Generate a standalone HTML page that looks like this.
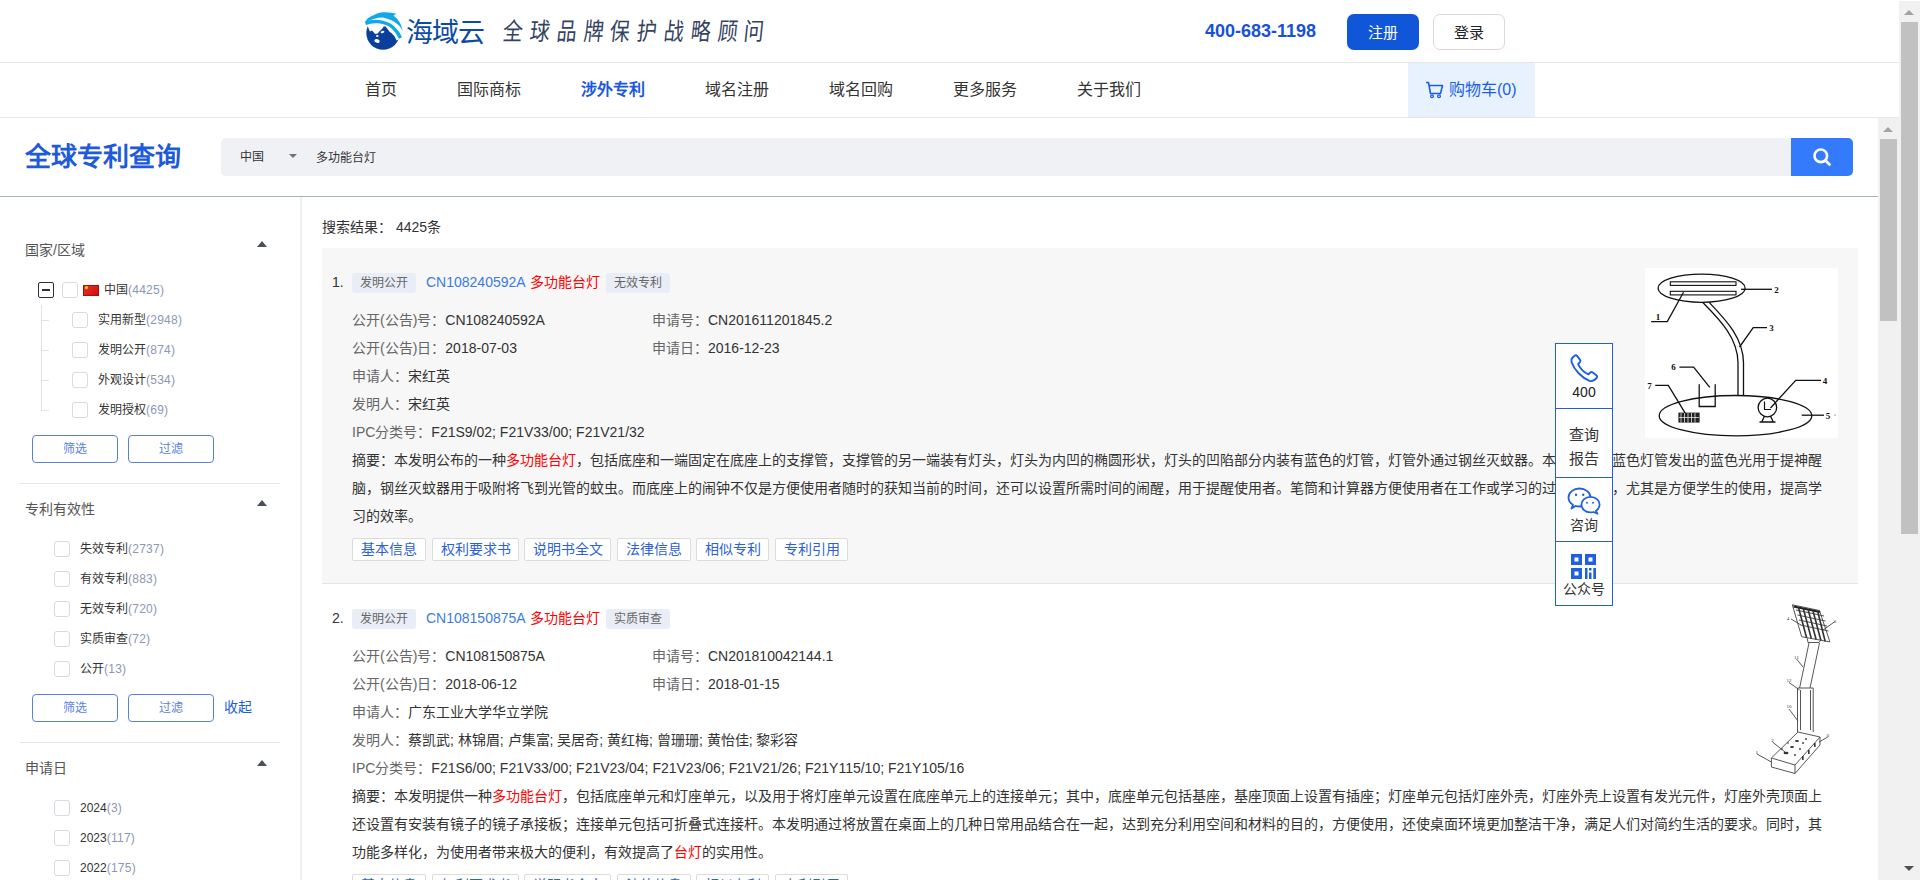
<!DOCTYPE html>
<html lang="zh-CN"><head><meta charset="utf-8">
<style>
*{margin:0;padding:0;box-sizing:border-box}
html,body{width:1920px;height:880px;overflow:hidden;background:#fff}
body{font-family:"Liberation Sans",sans-serif;color:#333;position:relative}
.a{position:absolute;white-space:nowrap}
/* header */
#hdr{position:absolute;left:0;top:0;width:1899px;height:63px;border-bottom:1px solid #e6e6e6;background:#fff}
#nav{position:absolute;left:0;top:63px;width:1899px;height:55px;border-bottom:1px solid #e6e6e6;background:#fff}
.nv{position:absolute;top:0;height:54px;line-height:54px;font-size:16px;color:#333}
.btn{position:absolute;top:14px;width:72px;height:36px;border-radius:7px;font-size:15px;line-height:36px;text-align:center}
/* search */
#srch{position:absolute;left:0;top:118px;width:1878px;height:79px;border-bottom:1px solid #a5afc8;background:#fff}
/* sidebar */
#side{position:absolute;left:0;top:197px;width:302px;height:683px;border-right:2px solid #f0f0f0;background:#fff}
.sh{position:absolute;left:25px;font-size:14px;color:#555;line-height:20px}
.car{position:absolute;left:257px;width:0;height:0;border-left:5px solid transparent;border-right:5px solid transparent;border-bottom:6px solid #4a4f5c}
.cb{position:absolute;width:16px;height:16px;border:1px solid #d7dae1;border-radius:3px;background:#fff}
.lt{position:absolute;font-size:12px;line-height:16px;color:#333}
.lt i{font-style:normal;color:#8c96b8;letter-spacing:0.25px}
.sb{position:absolute;width:86px;height:28px;border:1px solid #5b7fdc;border-radius:4px;font-size:12px;line-height:26px;text-align:center;color:#5b7fdc;background:#fff}
.dv{position:absolute;left:20px;width:260px;height:1px;background:#e3e6ee}
/* main */
.card{position:absolute;left:322px;width:1536px;height:336px}
.num{position:absolute;left:10px;top:24px;font-size:14px;line-height:20px;color:#333}
.tag{position:absolute;top:25px;height:20px;line-height:19px;padding:1px 8px 0;font-size:12px;color:#666;background:#e9edf6;border-radius:3px}
.cn{position:absolute;left:104px;top:24px;font-size:14px;line-height:20px;color:#3a7bdf}
.hl{color:#f00}
.row{position:absolute;left:30px;font-size:14px;line-height:28px;color:#333}
.row b{font-weight:normal;color:#666}
.ops{position:absolute;left:30px;display:flex;gap:6px}
.op{position:absolute;text-align:center;height:23px;border:1px solid #dcdcdc;border-radius:2px;background:#fff;padding:0;font-size:14px;line-height:21px;color:#2d5fd6}
/* scrollbars */
.trk{position:absolute;background:#f1f1f1}
.thm{position:absolute;background:#c1c1c1}
</style></head><body>

<!-- HEADER -->
<div id="hdr">
  <svg class="a" style="left:360px;top:8px" width="48" height="46" viewBox="0 0 48 46">
    <circle cx="23" cy="25.1" r="16.7" fill="#0a3f9c"/>
    <path d="M2 2 H46 V32.4 L38.7 31.4 L36.6 32.4 L34.5 28.2 L31.4 25.1 L29.3 23.5 L27.2 20.4 L25.1 18.3 L23.5 18.8 L22 20.9 L19.3 23.5 L17.8 25.6 L15.2 26.1 L12 22.5 L9.9 23.5 L7.3 17.3 L2 17 Z" fill="#fff"/>
    <path d="M40 32 L46 32 V46 H40 Z" fill="#fff" opacity="0"/>
    <ellipse cx="22.5" cy="24" rx="2" ry="1" fill="#fff" transform="rotate(-25 22.5 24)"/>
    <ellipse cx="17.3" cy="28" rx="1.3" ry="1" fill="#fff"/>
    <path d="M14.5 32 C15.5 30.5 18 30.8 19.5 32.5 C20 34 19 35.5 17.5 35 C16 34.5 14 34 14.5 32 Z" fill="#fff"/>
    <path d="M5.5 15.5 C12 12.3 25 12.5 33 19.5 C36.5 22.8 39 26.5 40.5 30" fill="none" stroke="#10a8e8" stroke-width="3.4"/>
    <path d="M5 15 C6 11 10 8.5 13.6 7.3 C17 4.7 21 4 25 4.2 C30 4.4 33.5 5 36.1 5.8 L33.5 7.8 C38 10.5 41.5 16 42.6 23 C40 17.5 35 12.3 23 9.6 C17 9.6 10 11.5 5 15 Z" fill="#10a8e8"/>
  </svg>
  <div class="a" style="left:406px;top:15.5px;font-size:27px;line-height:34px;color:#0c4aa5;letter-spacing:-1px">海域云</div>
  <div class="a" style="left:503px;top:16px;font-size:20px;line-height:30px;color:#34435f;letter-spacing:6.8px;font-weight:300;transform:skewX(-6deg) scaleY(1.22);transform-origin:0 50%">全球品牌保护战略顾问</div>
  <div class="a" style="left:1205px;top:19px;font-size:18px;line-height:24px;font-weight:bold;color:#1652d6">400-683-1198</div>
  <div class="btn" style="left:1347px;background:#0f56d9;color:#fff;line-height:38px">注册</div>
  <div class="btn" style="left:1433px;border:1px solid #d9d9d9;color:#222;line-height:36px">登录</div>
</div>
<div id="nav">
  <div class="nv" style="left:365px">首页</div>
  <div class="nv" style="left:457px">国际商标</div>
  <div class="nv" style="left:581px;color:#1a58e0;font-weight:bold">涉外专利</div>
  <div class="nv" style="left:705px">域名注册</div>
  <div class="nv" style="left:829px">域名回购</div>
  <div class="nv" style="left:953px">更多服务</div>
  <div class="nv" style="left:1077px">关于我们</div>
  <div class="a" style="left:1408px;top:0;width:127px;height:54px;background:#e8f2fe"></div>
  <svg class="a" style="left:1425px;top:18px" width="20" height="18" viewBox="0 0 20 18">
    <path d="M1 1.5 H3.5 L5.5 12.5 H15.5 L17.5 4.5 H4.5" fill="none" stroke="#1a5ee8" stroke-width="1.6" stroke-linejoin="round"/>
    <circle cx="7" cy="15.3" r="1.4" fill="none" stroke="#1a5ee8" stroke-width="1.3"/>
    <circle cx="14" cy="15.3" r="1.4" fill="none" stroke="#1a5ee8" stroke-width="1.3"/>
  </svg>
  <div class="nv" style="left:1449px;color:#1a5ee8">购物车(0)</div>
</div>

<!-- SEARCH -->
<div id="srch">
  <div class="a" style="left:25px;top:22px;font-size:26px;line-height:34px;font-weight:bold;color:#1d5bdb">全球专利查询</div>
  <div class="a" style="left:221px;top:20px;width:1570px;height:38px;background:#f0f1f5;border-radius:5px 0 0 5px"></div>
  <div class="a" style="left:240px;top:20px;font-size:12px;line-height:38px;color:#333">中国</div>
  <div class="a" style="left:289px;top:36px;width:0;height:0;border-left:4.5px solid transparent;border-right:4.5px solid transparent;border-top:4.5px solid #6e717a"></div>
  <div class="a" style="left:316px;top:21px;font-size:12px;line-height:38px;color:#333">多功能台灯</div>
  <div class="a" style="left:1791px;top:20px;width:62px;height:38px;background:#347afc;border-radius:0 5px 5px 0"></div>
  <svg class="a" style="left:1812px;top:29px" width="20" height="20" viewBox="0 0 20 20">
    <circle cx="8.8" cy="8.8" r="6.3" fill="none" stroke="#fff" stroke-width="2.6"/>
    <path d="M13.5 13.5 L17.5 17.5" stroke="#fff" stroke-width="2.8" stroke-linecap="round"/>
  </svg>
</div>

<!-- SIDEBAR -->
<div id="side">
  <div class="sh" style="top:43px">国家/区域</div>
  <div class="car" style="top:44px"></div>
  <div class="a" style="left:38px;top:85px;width:16px;height:16px;border:1.5px solid #2b2f3a;border-radius:2px"></div>
  <div class="a" style="left:42px;top:92px;width:8px;height:2px;background:#2b2f3a"></div>
  <div class="cb" style="left:62px;top:85px"></div>
  <div class="a" style="left:83px;top:88px;width:16px;height:11px;background:linear-gradient(135deg,#e8332a,#c80f0f);border:1px solid #b50808"></div>
  <div class="a" style="left:85px;top:89px;width:3px;height:3px;background:#ffde00;border-radius:50%"></div>
  <div class="lt" style="left:104px;top:85px">中国<i>(4425)</i></div>
  <div class="a" style="left:41px;top:108px;width:1px;height:106px;background:#e3e3e3"></div>
  <div class="a" style="left:41px;top:123px;width:8px;height:1px;background:#e3e3e3"></div>
  <div class="a" style="left:41px;top:153px;width:8px;height:1px;background:#e3e3e3"></div>
  <div class="a" style="left:41px;top:183px;width:8px;height:1px;background:#e3e3e3"></div>
  <div class="a" style="left:41px;top:213px;width:8px;height:1px;background:#e3e3e3"></div>
  <div class="cb" style="left:72px;top:115px"></div><div class="lt" style="left:98px;top:115px">实用新型<i>(2948)</i></div>
  <div class="cb" style="left:72px;top:145px"></div><div class="lt" style="left:98px;top:145px">发明公开<i>(874)</i></div>
  <div class="cb" style="left:72px;top:175px"></div><div class="lt" style="left:98px;top:175px">外观设计<i>(534)</i></div>
  <div class="cb" style="left:72px;top:205px"></div><div class="lt" style="left:98px;top:205px">发明授权<i>(69)</i></div>
  <div class="sb" style="left:32px;top:238px">筛选</div>
  <div class="sb" style="left:128px;top:238px">过滤</div>
  <div class="dv" style="top:286px"></div>

  <div class="sh" style="top:302px">专利有效性</div>
  <div class="car" style="top:303px"></div>
  <div class="cb" style="left:54px;top:344px"></div><div class="lt" style="left:80px;top:344px">失效专利<i>(2737)</i></div>
  <div class="cb" style="left:54px;top:374px"></div><div class="lt" style="left:80px;top:374px">有效专利<i>(883)</i></div>
  <div class="cb" style="left:54px;top:404px"></div><div class="lt" style="left:80px;top:404px">无效专利<i>(720)</i></div>
  <div class="cb" style="left:54px;top:434px"></div><div class="lt" style="left:80px;top:434px">实质审查<i>(72)</i></div>
  <div class="cb" style="left:54px;top:464px"></div><div class="lt" style="left:80px;top:464px">公开<i>(13)</i></div>
  <div class="sb" style="left:32px;top:497px">筛选</div>
  <div class="sb" style="left:128px;top:497px">过滤</div>
  <div class="a" style="left:224px;top:500px;font-size:14px;line-height:20px;color:#1a5ee0">收起</div>
  <div class="dv" style="top:545px"></div>

  <div class="sh" style="top:561px">申请日</div>
  <div class="car" style="top:563px"></div>
  <div class="cb" style="left:54px;top:603px"></div><div class="lt" style="left:80px;top:603px">2024<i>(3)</i></div>
  <div class="cb" style="left:54px;top:633px"></div><div class="lt" style="left:80px;top:633px">2023<i>(117)</i></div>
  <div class="cb" style="left:54px;top:663px"></div><div class="lt" style="left:80px;top:663px">2022<i>(175)</i></div>
</div>

<!-- MAIN -->
<div class="a" style="left:322px;top:217px;font-size:14px;line-height:20px;color:#333">搜索结果： 4425条</div>

<div class="card" style="top:248px;background:#f7f7f7;border-bottom:1px solid #e2e4eb">
  <div class="num">1.</div>
  <div class="tag" style="left:30px">发明公开</div>
  <div class="cn">CN108240592A <span class="hl" style="margin-left:1.5px">多功能台灯</span></div>
  <div class="tag" style="left:284px">无效专利</div>
  <div class="row" style="top:58px"><b>公开(公告)号：</b>CN108240592A</div>
  <div class="row" style="top:58px;left:330px"><b>申请号：</b>CN201611201845.2</div>
  <div class="row" style="top:86px"><b>公开(公告)日：</b>2018-07-03</div>
  <div class="row" style="top:86px;left:330px"><b>申请日：</b>2016-12-23</div>
  <div class="row" style="top:114px"><b>申请人：</b>宋红英</div>
  <div class="row" style="top:142px"><b>发明人：</b>宋红英</div>
  <div class="row" style="top:170px"><b>IPC分类号：</b>F21S9/02; F21V33/00; F21V21/32</div>
  <div class="row" style="top:198px">摘要：本发明公布的一种<span class="hl">多功能台灯</span>，包括底座和一端固定在底座上的支撑管，支撑管的另一端装有灯头，灯头为内凹的椭圆形状，灯头的凹陷部分内装有蓝色的灯管，灯管外通过钢丝灭蚊器。本发明中的蓝色灯管发出的蓝色光用于提神醒</div>
  <div class="row" style="top:226px">脑，钢丝灭蚊器用于吸附将飞到光管的蚊虫。而底座上的闹钟不仅是方便使用者随时的获知当前的时间，还可以设置所需时间的闹醒，用于提醒使用者。笔筒和计算器方便使用者在工作或学习的过程中使用，尤其是方便学生的使用，提高学</div>
  <div class="row" style="top:254px">习的效率。</div>
  <div class="op" style="top:290px;left:30px;width:74px">基本信息</div><div class="op" style="top:290px;left:110px;width:87px">权利要求书</div><div class="op" style="top:290px;left:202px;width:87px">说明书全文</div><div class="op" style="top:290px;left:295px;width:74px">法律信息</div><div class="op" style="top:290px;left:374px;width:73px">相似专利</div><div class="op" style="top:290px;left:453px;width:73px">专利引用</div>
  <div class="a" style="left:1323px;top:20px;width:193px;height:170px;background:#fff">
    <svg width="193" height="170" viewBox="0 0 193 170" style="position:absolute;left:0;top:0">
<g fill="none" stroke="#111" stroke-width="1.3">
<ellipse cx="56.6" cy="20.2" rx="43.5" ry="14.1"/>
<rect x="25.3" y="13.8" width="65.7" height="3.6" stroke-width="1.1"/>
<rect x="25.3" y="23.3" width="65.7" height="3.6" stroke-width="1.1"/>
<path d="M96 21.3 H127"/>
<path d="M38.5 24.3 L22.3 53.6 H6.1"/>
<path d="M57.7 34.4 C75 52 93 70 93 95 V127.4"/>
<path d="M64.2 34.4 C81 52 98.5 70 98.5 95 V127.4"/>
<path d="M94.5 79 L108.2 59.7 H122"/>
<ellipse cx="90.5" cy="147.7" rx="76.3" ry="20.2"/>
<path d="M54.2 116.3 V138.5 H70.2 V116.3"/>
<path d="M34.4 99.1 H48.6 L64.8 119.3"/>
<path d="M10.2 117.3 H23.3 L40.5 145.6"/>
<circle cx="122.4" cy="139.5" r="9.3"/>
<path d="M119.5 133.5 V141.5 H126" stroke-width="1.2"/>
<path d="M117 153.5 L119.5 148 M128 153.5 L125.5 148 M114.5 154 H130.5"/>
<path d="M125.5 140 L150.7 112.3 H176"/>
<path d="M156.7 147.2 H179"/>
</g>
<rect x="33.4" y="144.6" width="21.2" height="10" fill="#222"/>
<path d="M36 145 V154.5 M39.5 145 V154.5 M43 145 V154.5 M46.5 145 V154.5 M50 145 V154.5 M34 149.5 H54" stroke="#fff" stroke-width="0.7"/>
<g font-family="Liberation Serif" font-weight="bold" font-size="9" fill="#111" text-anchor="middle">
<text x="131.5" y="24.5">2</text><text x="13" y="52">1</text><text x="126.4" y="63">3</text>
<text x="28.4" y="101.5">6</text><text x="4.5" y="121">7</text><text x="180" y="116">4</text><text x="183" y="151">5</text>
</g>
<circle cx="190" cy="147" r="0.6" fill="#333"/>
</svg>
  </div>
</div>

<div class="card" style="top:584px;background:#fff">
  <div class="num">2.</div>
  <div class="tag" style="left:30px">发明公开</div>
  <div class="cn">CN108150875A <span class="hl" style="margin-left:1.5px">多功能台灯</span></div>
  <div class="tag" style="left:284px">实质审查</div>
  <div class="row" style="top:58px"><b>公开(公告)号：</b>CN108150875A</div>
  <div class="row" style="top:58px;left:330px"><b>申请号：</b>CN201810042144.1</div>
  <div class="row" style="top:86px"><b>公开(公告)日：</b>2018-06-12</div>
  <div class="row" style="top:86px;left:330px"><b>申请日：</b>2018-01-15</div>
  <div class="row" style="top:114px"><b>申请人：</b>广东工业大学华立学院</div>
  <div class="row" style="top:142px"><b>发明人：</b>蔡凯武; 林锦眉; 卢集富; 吴居奇; 黄红梅; 曾珊珊; 黄怡佳; 黎彩容</div>
  <div class="row" style="top:170px"><b>IPC分类号：</b>F21S6/00; F21V33/00; F21V23/04; F21V23/06; F21V21/26; F21Y115/10; F21Y105/16</div>
  <div class="row" style="top:198px">摘要：本发明提供一种<span class="hl">多功能台灯</span>，包括底座单元和灯座单元，以及用于将灯座单元设置在底座单元上的连接单元；其中，底座单元包括基座，基座顶面上设置有插座；灯座单元包括灯座外壳，灯座外壳上设置有发光元件，灯座外壳顶面上</div>
  <div class="row" style="top:226px">还设置有安装有镜子的镜子承接板；连接单元包括可折叠式连接杆。本发明通过将放置在桌面上的几种日常用品结合在一起，达到充分利用空间和材料的目的，方便使用，还使桌面环境更加整洁干净，满足人们对简约生活的要求。同时，其</div>
  <div class="row" style="top:254px">功能多样化，为使用者带来极大的便利，有效提高了<span class="hl">台灯</span>的实用性。</div>
  <div class="op" style="top:290px;left:30px;width:74px">基本信息</div><div class="op" style="top:290px;left:110px;width:87px">权利要求书</div><div class="op" style="top:290px;left:202px;width:87px">说明书全文</div><div class="op" style="top:290px;left:295px;width:74px">法律信息</div><div class="op" style="top:290px;left:374px;width:73px">相似专利</div><div class="op" style="top:290px;left:453px;width:73px">专利引用</div>
  <div class="a" style="left:1323px;top:20px;width:193px;height:170px;background:#fff">
    <svg width="193" height="170" viewBox="0 0 193 170" style="position:absolute;left:0;top:0">
<g fill="none" stroke="#444" stroke-width="0.9">
<path d="M147.3 0.8 L174.5 6.5 L184.9 37.9 L156.7 32.7 Z" fill="#fff"/>
<path d="M148.5 2.5 L175 8" stroke="#222" stroke-width="2.2"/>
<path d="M151 6 L179 12 M152.5 11 L180.5 17 M154 16 L182 22 M155.5 21 L183.5 27"/>
<path d="M153.5 3.5 L161.5 33.5 M158.3 4.5 L166.3 34.5 M163.1 5.5 L171.1 35.5 M167.9 6.5 L175.9 36.5 M172.7 7.5 L180.2 37.5" stroke="#333" stroke-width="1.6"/>
<path d="M162 33.5 L163 38.5 H174 L176 35.5"/>
<path d="M164 39 L154.6 84 M174.5 39 L165 84"/>
<path d="M152.5 84 H168.2 V128 M152.5 84 V128 M155.5 86 V126 M165.5 86 V126"/>
<path d="M126.4 154 L153 128 L175 133 L150 161 Z" fill="#fff"/>
<path d="M126.4 154 V163 L150 169.5 V161 M150 169.5 L175 141 V133"/>
<path d="M146 15 L156 21 M190 17.5 L178 26 M151.5 55 L158 63 M144 78.5 L154.6 86 M144 105 L153 117 M127.5 138 L140 148 M112 150 L126.4 158 M182.8 133 L174 138"/>
</g>
<g fill="#333">
<ellipse cx="152" cy="137" rx="2" ry="1"/><ellipse cx="147" cy="143" rx="2" ry="1"/><ellipse cx="141" cy="149" rx="2.5" ry="1.2"/>
<circle cx="158" cy="139" r="0.9"/><circle cx="161" cy="135" r="0.9"/><circle cx="155" cy="145" r="0.9"/><circle cx="150" cy="151" r="0.9"/><circle cx="143" cy="139" r="0.8"/><circle cx="137" cy="145" r="0.8"/>
<rect x="157" y="152" width="1.6" height="4"/><rect x="163" y="146" width="1.6" height="4"/><rect x="169" y="139" width="1.6" height="4"/>
</g>
<g font-family="Liberation Serif" font-size="5" fill="#333" text-anchor="middle">
<text x="143" y="15.5">4</text><text x="190" y="18.5">3</text><text x="151.5" y="55">11</text><text x="144" y="78">12</text><text x="144" y="104">10</text><text x="127.4" y="138">2</text><text x="111.7" y="150">1</text><text x="183" y="132.5">6</text>
</g>
</svg>
  </div>
</div>

<!-- WIDGET -->
<div class="a" style="left:1555px;top:343px;width:58px;height:263px;border:1px solid #1f5fe0;background:#fff"></div>
<div class="a" style="left:1555px;top:408px;width:58px;height:1px;background:#1f5fe0"></div>
<div class="a" style="left:1555px;top:477px;width:58px;height:1px;background:#1f5fe0"></div>
<div class="a" style="left:1555px;top:541px;width:58px;height:1px;background:#1f5fe0"></div>
<svg class="a" style="left:1568px;top:352.5px" width="31.5" height="31.5" viewBox="0 0 30 30">
  <path d="M6.5 2.5 C4 4 2.5 6 3.5 9 C6 16 13 23.5 20.5 26.5 C23.5 27.5 25.5 26 27.5 23.5 C28 22.5 27.8 21.8 27 21.2 L23.5 18.5 C22.7 18 22 18 21.3 18.6 L19.5 20.3 C15.5 18.5 11.5 14.5 9.7 10.5 L11.4 8.7 C12 8 12 7.3 11.5 6.5 L8.8 3 C8.2 2.2 7.4 2 6.5 2.5 Z" fill="none" stroke="#1f5fe0" stroke-width="1.85" stroke-linejoin="round"/>
</svg>
<div class="a" style="left:1555px;top:383px;width:58px;text-align:center;font-size:14px;line-height:18px;color:#222">400</div>
<div class="a" style="left:1555px;top:423px;width:58px;text-align:center;font-size:15px;line-height:24px;color:#333;white-space:normal">查询<br>报告</div>
<svg class="a" style="left:1567px;top:487px" width="34" height="28" viewBox="0 0 34 28">
  <path d="M6 17.8 C3 16 1.5 13.5 1.5 10.5 C1.5 5.5 6.5 1.5 12.5 1.5 C18.5 1.5 23.5 5.5 23.5 10.5 C23.5 15.5 18.5 19.5 12.5 19.5 C11 19.5 9.7 19.3 8.5 18.9 L4.5 21.5 Z" fill="#fff" stroke="#1f5fe0" stroke-width="1.8" stroke-linejoin="round"/>
  <path d="M23.5 9.8 C28.6 9.8 32.6 13.3 32.6 17.6 C32.6 20.2 31.2 22.4 29 23.8 L30.5 26.8 L26.6 25 C25.6 25.3 24.6 25.4 23.5 25.4 C18.4 25.4 14.4 21.9 14.4 17.6 C14.4 13.3 18.4 9.8 23.5 9.8 Z" fill="#fff" stroke="#1f5fe0" stroke-width="1.8" stroke-linejoin="round"/>
  <circle cx="9" cy="7.8" r="1.2" fill="#1f5fe0"/><circle cx="16.2" cy="7.8" r="1.2" fill="#1f5fe0"/>
  <circle cx="20" cy="15.8" r="1" fill="#1f5fe0"/><circle cx="26" cy="15.8" r="1" fill="#1f5fe0"/>
</svg>
<div class="a" style="left:1555px;top:515px;width:58px;text-align:center;font-size:14px;line-height:20px;color:#333">咨询</div>
<svg class="a" style="left:1571px;top:554px" width="26" height="25" viewBox="0 0 26 25">
  <rect x="0" y="0" width="11" height="11" fill="#1f5fe0"/><rect x="3.5" y="3.5" width="4" height="4" fill="#fff"/>
  <rect x="14" y="0" width="11" height="11" fill="#1f5fe0"/><rect x="17.5" y="3.5" width="4" height="4" fill="#fff"/>
  <rect x="0" y="14" width="11" height="11" fill="#1f5fe0"/><rect x="3.5" y="17.5" width="4" height="4" fill="#fff"/>
  <rect x="14" y="14" width="2.5" height="11" fill="#1f5fe0"/><rect x="18" y="14" width="2.5" height="2.5" fill="#1f5fe0"/><rect x="18" y="18.5" width="2.5" height="6.5" fill="#1f5fe0"/><rect x="22.3" y="14" width="2.7" height="11" fill="#1f5fe0"/>
</svg>
<div class="a" style="left:1555px;top:579px;width:58px;text-align:center;font-size:14px;line-height:20px;color:#333">公众号</div>

<!-- SCROLLBARS -->
<div class="trk" style="left:1878px;top:118px;width:21px;height:762px"></div>
<div class="thm" style="left:1880px;top:139px;width:17px;height:182px"></div>
<div class="a" style="left:1883px;top:127px;width:0;height:0;border-left:5px solid transparent;border-right:5px solid transparent;border-bottom:5px solid #a3a3a3"></div>
<div class="trk" style="left:1899px;top:1px;width:21px;height:879px"></div>
<div class="thm" style="left:1901px;top:22px;width:17px;height:512px"></div>
<div class="a" style="left:1904px;top:10px;width:0;height:0;border-left:5px solid transparent;border-right:5px solid transparent;border-bottom:5px solid #a3a3a3"></div>
<div class="a" style="left:1904px;top:866px;width:0;height:0;border-left:5px solid transparent;border-right:5px solid transparent;border-top:5px solid #505050"></div>
</body></html>
